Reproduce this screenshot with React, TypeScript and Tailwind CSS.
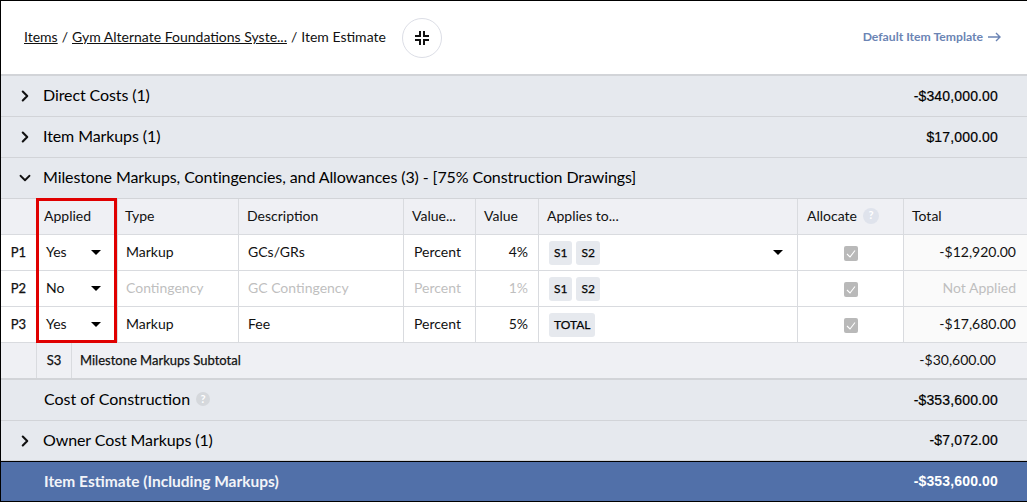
import { ChevronDown, ChevronRight } from "lucide-react";

const gridCols = "grid grid-cols-[35px_81px_121px_165px_72px_63px_259px_106px_1fr]";
const cell = "flex h-full items-center border-l border-[#d9dbdf] pb-[2px]";
const money = "mt-[2px] font-['Liberation_Sans',sans-serif] text-[14px] tracking-[0.15px] text-black [-webkit-text-stroke:0.2px_black]";
const medium = "[-webkit-text-stroke:0.25px_#111]";

function Caret() {
  return <span className="mt-[2px] block h-0 w-0 border-x-[5px] border-t-[5px] border-x-transparent border-t-black" />;
}

function Chip({ label }: { label: string }) {
  return (
    <span className={`mt-[2px] flex h-[24px] items-center rounded-[3px] bg-[#e6e9ee] px-[5px] text-[12px] text-black ${medium}`}>
      {label}
    </span>
  );
}

function Check() {
  return (
    <svg width="14" height="15" viewBox="0 0 14 15" className="mt-[4px] block">
      <rect width="14" height="15" rx="2" fill="#b9b9b9" />
      <path d="M3 8l3 3 5-6.5" fill="none" stroke="#fff" strokeWidth="1.1" />
    </svg>
  );
}

function Help({ className }: { className: string }) {
  return (
    <span className={`flex items-center justify-center rounded-full text-[11px] font-bold text-white ${className}`}>
      ?
    </span>
  );
}

function SectionRow(props: { title: string; amount?: string; open?: boolean; height: string }) {
  return (
    <div className={`flex items-center border-b border-[#d2d4d8] bg-[#e6e9ee] pb-[2px] pr-[29px] text-[16px] tracking-[-0.1px] ${props.height}`}>
      <span className="mt-[2px] flex w-[42px] justify-center pl-[6px]">
        {props.open ? (
          <ChevronDown size={18} strokeWidth={2.4} color="#111" />
        ) : (
          <ChevronRight size={18} strokeWidth={2.8} color="#111" />
        )}
      </span>
      <span className="text-black">{props.title}</span>
      {props.amount && <span className={`ml-auto ${money}`}>{props.amount}</span>}
    </div>
  );
}

const rows = [
  { id: "P1", applied: "Yes", type: "Markup", desc: "GCs/GRs", value: "4%", chips: ["S1", "S2"], total: "-$12,920.00", caret: true },
  { id: "P2", applied: "No", type: "Contingency", desc: "GC Contingency", value: "1%", chips: ["S1", "S2"], total: "Not Applied", off: true },
  { id: "P3", applied: "Yes", type: "Markup", desc: "Fee", value: "5%", chips: ["TOTAL"], total: "-$17,680.00" },
];

export default function App() {
  return (
    <div className="h-[502px] w-[1027px] overflow-hidden border-l border-t border-black bg-white font-['Lato',sans-serif] text-[14px] text-[#111]">
      <div className="flex h-[75px] items-center border-b-2 border-[#d2d4d8] pl-[23px] pr-[26px]">
        <div className="flex pb-[2px]">
          <span className="underline">Items</span>
          <span className="mx-[4px]">/</span>
          <span className="underline">Gym Alternate Foundations Syste...</span>
          <span className="mx-[4px]">/</span>
          <span>Item Estimate</span>
        </div>
        <span className="ml-[16px] flex h-[40px] w-[40px] items-center justify-center rounded-full border border-[#dcdee6]">
          <svg width="14" height="14" viewBox="0 0 14 14" fill="none" stroke="#111" strokeWidth="2">
            <path d="M5 0v5H0M9 0v5h5M5 14V9H0M9 14V9h5" />
          </svg>
        </span>
        <a className="ml-auto flex items-center gap-[5px] text-[12.2px] font-bold text-[#6b84b4]">
          Default Item Template
          <svg width="13" height="10" viewBox="0 0 13 10" fill="none" stroke="#6b84b4" strokeWidth="1.4">
            <path d="M0 5h12M8 1l4 4-4 4" />
          </svg>
        </a>
      </div>

      <SectionRow title="Direct Costs (1)" amount="-$340,000.00" height="h-[41px]" />
      <SectionRow title="Item Markups (1)" amount="$17,000.00" height="h-[41px]" />
      <SectionRow title="Milestone Markups, Contingencies, and Allowances (3) - [75% Construction Drawings]" open height="h-[41px]" />

      <div className="relative">
        <div className={`${gridCols} h-[36px] items-center border-b border-[#d9dbdf] bg-[#eff0f4] text-[14px]`}>
          <div className="h-full" />
          <div className={`${cell} pl-[7px]`}>Applied</div>
          <div className={`${cell} pl-[7px]`}>Type</div>
          <div className={`${cell} pl-[8px]`}>Description</div>
          <div className={`${cell} pl-[8px]`}>Value...</div>
          <div className={`${cell} pl-[8px]`}>Value</div>
          <div className={`${cell} pl-[8px]`}>Applies to...</div>
          <div className={`${cell} gap-[6px] pl-[9px]`}>
            Allocate <Help className="h-[16px] w-[16px] bg-[#dfe3ec]" />
          </div>
          <div className={`${cell} pl-[8px]`}>Total</div>
        </div>

        {rows.map((r) => (
          <div key={r.id} className={`${gridCols} h-[36px] items-center border-b border-[#d9dbdf]`}>
            <div className={`flex h-full items-center justify-center text-[13px] ${medium}`}>{r.id}</div>
            <div className={`${cell} justify-between pl-[9px] pr-[16px]`}>
              {r.applied}
              <Caret />
            </div>
            <div className={`${cell} pl-[8px] ${r.off ? "text-[#bfbfbf]" : ""}`}>{r.type}</div>
            <div className={`${cell} pl-[9px] ${r.off ? "text-[#bfbfbf]" : ""}`}>{r.desc}</div>
            <div className={`${cell} pl-[10px] ${r.off ? "text-[#bfbfbf]" : ""}`}>Percent</div>
            <div className={`${cell} justify-end pr-[10px] ${r.off ? "text-[#bfbfbf]" : ""}`}>{r.value}</div>
            <div className={`${cell} gap-[4px] pl-[10px]`}>
              {r.chips.map((c) => (
                <Chip key={c} label={c} />
              ))}
              {r.caret && (
                <span className="ml-auto pr-[14px]">
                  <Caret />
                </span>
              )}
            </div>
            <div className={`${cell} justify-center`}>
              <Check />
            </div>
            <div className={`${cell} justify-end bg-[#fafafa] pr-[11px] ${r.off ? "text-[#bfbfbf]" : ""}`}>{r.total}</div>
          </div>
        ))}

        <div className="flex h-[37px] items-center border-b-2 border-[#d2d4d8] bg-[#eff0f4] text-[13px]">
          <div className="h-full w-[35px]" />
          <div className={`flex h-full w-[35px] items-center justify-center border-l border-[#d9dbdf] ${medium}`}>S3</div>
          <div className={`flex h-full items-center border-l border-[#d9dbdf] pl-[8px] ${medium}`}>Milestone Markups Subtotal</div>
          <span className="ml-auto pb-[2px] pr-[31px] text-[14px]">-$30,600.00</span>
        </div>

        {/* red highlight drawn over the Applied column */}
        <div className="absolute left-[35px] top-[-1px] h-[145px] w-[81px] border-[3px] border-[#e00000]" />
      </div>

      <div className="flex h-[41px] items-center border-b border-[#d2d4d8] bg-[#e6e9ee] pb-[2px] pl-[43px] pr-[29px] text-[16px] text-black">
        Cost of Construction
        <Help className="ml-[6px] h-[14px] w-[14px] bg-[#d5d8dc]" />
        <span className={`ml-auto ${money}`}>-$353,600.00</span>
      </div>
      <SectionRow title="Owner Cost Markups (1)" amount="-$7,072.00" height="h-[40px]" />
      <div className="flex h-[41px] items-center border-y border-black bg-[#5170a9] pl-[43px] pr-[29px] text-[15.5px] font-bold text-[#f2f4f8]">
        Item Estimate (Including Markups)
        <span className="ml-auto font-['Liberation_Sans',sans-serif] text-[14px] tracking-[0.15px] text-white">-$353,600.00</span>
      </div>
    </div>
  );
}
